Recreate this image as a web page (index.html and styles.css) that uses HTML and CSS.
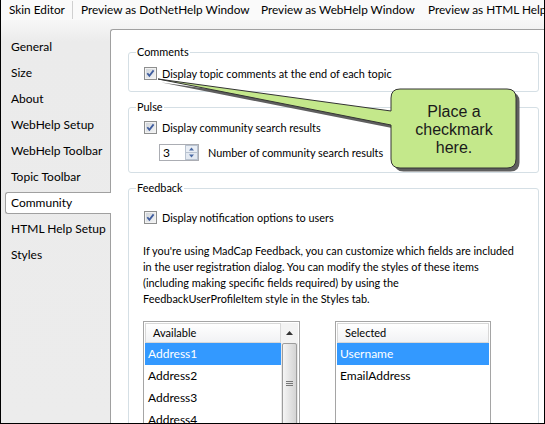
FILE: index.html
```html
<!DOCTYPE html>
<html>
<head>
<meta charset="utf-8">
<link rel="stylesheet" href="styles.css">
</head>
<body>
<div class="window">
  <div class="tabs">
    <div class="tab tab-first">Skin Editor</div>
    <div class="tab-sep"></div>
    <div class="tab tab-dotnet">Preview as DotNetHelp Window</div>
    <div class="tab tab-web">Preview as WebHelp Window</div>
    <div class="tab tab-html">Preview as HTML Help Window</div>
  </div>
  <div class="main">
    <ul class="nav">
      <li class="nav-item">General</li>
      <li class="nav-item">Size</li>
      <li class="nav-item">About</li>
      <li class="nav-item">WebHelp Setup</li>
      <li class="nav-item">WebHelp Toolbar</li>
      <li class="nav-item">Topic Toolbar</li>
      <li class="nav-item active">Community</li>
      <li class="nav-item">HTML Help Setup</li>
      <li class="nav-item">Styles</li>
    </ul>
    <div class="panel">
      <fieldset class="group g-comments">
        <legend>Comments</legend>
        <div class="check-row">
          <span class="cb"><svg width="11" height="11" viewBox="0 0 11 11"><path d="M2.3 5.2 L4.4 7.8 L8.6 2.4" fill="none" stroke="#3f5d9f" stroke-width="1.8"/></svg></span>
          <span>Display topic comments at the end of each topic</span>
        </div>
      </fieldset>
      <fieldset class="group g-pulse">
        <legend>Pulse</legend>
        <div class="check-row">
          <span class="cb"><svg width="11" height="11" viewBox="0 0 11 11"><path d="M2.3 5.2 L4.4 7.8 L8.6 2.4" fill="none" stroke="#3f5d9f" stroke-width="1.8"/></svg></span>
          <span>Display community search results</span>
        </div>
        <div class="spin-row">
          <div class="spinner">
            <span class="spin-val">3</span>
            <svg class="spin-btns" width="13" height="15" viewBox="0 0 13 15">
              <rect x="0.5" y="0.5" width="12" height="7" fill="#e9eef5" stroke="#b9c3d0"/>
              <rect x="0.5" y="7.5" width="12" height="7" fill="#e3e9f1" stroke="#b9c3d0"/>
              <path d="M4 5.5 L6.5 2.5 L9 5.5 Z" fill="#4b6aa3"/>
              <path d="M4 9.5 L6.5 12.5 L9 9.5 Z" fill="#4b6aa3"/>
            </svg>
          </div>
          <span>Number of community search results</span>
        </div>
      </fieldset>
      <fieldset class="group g-feedback">
        <legend>Feedback</legend>
        <div class="check-row">
          <span class="cb"><svg width="11" height="11" viewBox="0 0 11 11"><path d="M2.3 5.2 L4.4 7.8 L8.6 2.4" fill="none" stroke="#3f5d9f" stroke-width="1.8"/></svg></span>
          <span>Display notification options to users</span>
        </div>
        <p class="info">If you're using MadCap Feedback, you can customize which fields are included<br>in the user registration dialog. You can modify the styles of these items<br>(including making specific fields required) by using the<br>FeedbackUserProfileItem style in the Styles tab.</p>
        <div class="lists">
          <div class="listbox lb-available">
            <div class="lb-col">
              <div class="lb-head">Available</div>
              <div class="lb-row sel">Address1</div>
              <div class="lb-row">Address2</div>
              <div class="lb-row">Address3</div>
              <div class="lb-row">Address4</div>
            </div>
            <div class="scrollbar">
              <div class="sb-up"><svg width="7" height="4" viewBox="0 0 7 4"><path d="M0 4 L3.5 0 L7 4 Z" fill="#333"/></svg></div>
              <div class="sb-thumb">
                <svg class="sb-grip" width="7" height="6" viewBox="0 0 7 6"><path d="M0 0.5 H7 M0 2.5 H7 M0 4.5 H7" stroke="#777" stroke-width="1"/></svg>
              </div>
            </div>
          </div>
          <div class="listbox lb-selected">
            <div class="lb-col">
              <div class="lb-head">Selected</div>
              <div class="lb-row sel">Username</div>
              <div class="lb-row">EmailAddress</div>
            </div>
          </div>
        </div>
      </fieldset>
    </div>
  </div>
  <div class="callout">
    <svg class="callout-shape" width="545" height="424" viewBox="0 0 545 424">
      <path class="callout-shadow" d="M400 89 H507 Q516 89 516 98 V159 Q516 168 507 168 H400 Q391 168 391 159 V125 L158 79 L391 111 V98 Q391 89 400 89 Z" transform="translate(3.5 3.5)"/>
      <path class="callout-body" d="M400 89 H507 Q516 89 516 98 V159 Q516 168 507 168 H400 Q391 168 391 159 V125 L158 79 L391 111 V98 Q391 89 400 89 Z"/>
    </svg>
    <div class="callout-text">Place a<br>checkmark<br>here.</div>
  </div>
</div>
</body>
</html>
```
FILE: styles.css
```css
html, body {
  margin: 0;
  padding: 0;
  background: #fff;
}

body {
  font-family: Lato, "Liberation Sans", sans-serif;
  font-size: 12px;
  color: #000;
}

.window {
  position: relative;
  width: 545px;
  height: 424px;
  box-sizing: border-box;
  border: 1px solid #000;
  border-top: 0;
  overflow: hidden;
  background: #ececec;
}

/* top tab strip */
.tabs {
  display: flex;
  height: 20px;
  background: #fafafa;
  white-space: nowrap;
  font-size: 11.8px;
}

.tab {
  box-sizing: border-box;
  height: 20px;
  line-height: 20px;
  padding-left: 8px;
  flex: none;
}

.tab-first {
  width: 71px;
}

.tab-sep {
  flex: none;
  width: 1px;
  height: 18px;
  margin-top: 1px;
  background: #d0d0d0;
}

.tab-dotnet { width: 180px; }
.tab-web { width: 167px; }
.tab-html { width: 200px; }

/* main area */
.main {
  display: flex;
  height: 404px;
  background: linear-gradient(#f7f7f7 0px, #ebebeb 22px, #ececec 100%);
}

.nav {
  flex: none;
  width: 109px;
  margin: 0;
  padding: 16px 0 0 0;
  list-style: none;
  box-sizing: border-box;
}

.nav-item {
  height: 20px;
  line-height: 20px;
  margin: 0 -1px 4px 4px;
  padding-left: 5px;
  border: 1px solid transparent;
  border-right: 0;
  white-space: nowrap;
}

.nav-item.active {
  position: relative;
  z-index: 2;
  background: #fff;
  border-color: #a0a0a0;
  border-radius: 3px 0 0 3px;
}

.panel {
  flex: 1;
  margin-top: 9px;
  background: #fff;
  border-top: 1px solid #a0a0a0;
  border-left: 1px solid #a0a0a0;
  border-top-left-radius: 3px;
  min-width: 0;
}

/* group boxes */
.group {
  box-sizing: border-box;
  width: 411px;
  margin: 7px 0 0 17px;
  padding: 5px 10px 10px 7px;
  border: 1px solid #d5dfe5;
  border-radius: 3px;
  min-width: 0;
  font-size: 10.9px;
}

.group legend {
  padding: 0 1px;
  line-height: 16px;
  height: 16px;
}

.g-comments {
  margin-top: 14px;
}

.g-pulse {
  padding-top: 4px;
  padding-bottom: 11px;
}

.g-feedback {
  padding-top: 13px;
  height: 300px;
}

.check-row {
  display: flex;
  align-items: center;
  height: 16px;
  margin-left: 8px;
  white-space: nowrap;
}

.cb {
  box-sizing: border-box;
  flex: none;
  width: 13px;
  height: 13px;
  margin-right: 5px;
  border: 1px solid #8e8f8f;
  background: linear-gradient(135deg, #cdd2d8, #f6f6f6);
  box-shadow: inset 0 0 0 1px #f2f2f2;
}

.cb svg {
  display: block;
}

.spin-row {
  display: flex;
  align-items: center;
  height: 17px;
  margin: 9px 0 0 23px;
  white-space: nowrap;
}

.spinner {
  box-sizing: border-box;
  display: flex;
  align-items: center;
  justify-content: space-between;
  width: 40px;
  height: 17px;
  margin-right: 9px;
  padding: 0 0 0 3px;
  border: 1px solid #abadb3;
  background: #fff;
  font-size: 12px;
}

.spin-val {
  line-height: 15px;
}

.spin-btns {
  display: block;
}

.info {
  margin: 18px 0 0 7px;
  line-height: 16px;
  white-space: nowrap;
}

/* list boxes */
.lists {
  display: flex;
  gap: 35px;
  margin: 14px 0 0 7px;
}

.listbox {
  box-sizing: border-box;
  display: flex;
  height: 120px;
  padding: 1px;
  border: 1px solid #a5a5a5;
  background: #fff;
}

.lb-available { width: 157px; }
.lb-selected { width: 156px; }

.lb-col {
  flex: 1;
  min-width: 0;
}

.lb-available .lb-col {
  flex: none;
  width: 136px;
}

.lb-head {
  box-sizing: border-box;
  height: 20px;
  line-height: 18px;
  padding-left: 7px;
  border: 1px solid #d8d8d8;
  background: linear-gradient(#ffffff, #f1f2f4);
  font-size: 11px;
}

.lb-row {
  height: 22px;
  line-height: 22px;
  padding-left: 3px;
  white-space: nowrap;
  font-size: 12px;
}

.lb-row.sel {
  background: #3399ff;
  color: #fff;
}

.scrollbar {
  flex: none;
  width: 17px;
  display: flex;
  flex-direction: column;
  background: #e8e8e8;
}

.sb-up {
  flex: none;
  height: 20px;
  display: flex;
  align-items: center;
  justify-content: center;
  background: #f3f3f3;
}

.sb-up svg {
  display: block;
}

.sb-thumb {
  flex: 1;
  margin: 0 1px;
  border: 1px solid #9d9d9d;
  border-radius: 2px 2px 0 0;
  background: linear-gradient(to right, #f5f5f5, #e4e4e4 50%, #d4d4d4);
  position: relative;
}

.sb-grip {
  position: absolute;
  left: 3px;
  top: 37px;
}

/* callout overlay */
.callout {
  position: absolute;
  left: -1px;
  top: 0;
  width: 545px;
  height: 424px;
  pointer-events: none;
  z-index: 5;
}

.callout-shape {
  position: absolute;
  left: 0;
  top: 0;
}

.callout-shadow {
  fill: #5f5f5f;
}

.callout-body {
  fill: #c4e88b;
  stroke: #333;
  stroke-width: 1;
}

.callout-text {
  position: absolute;
  left: 391px;
  top: 103px;
  width: 126px;
  text-align: center;
  font-family: "Liberation Sans", Arial, sans-serif;
  font-size: 16px;
  line-height: 18px;
  color: #1a1a1a;
}
```
